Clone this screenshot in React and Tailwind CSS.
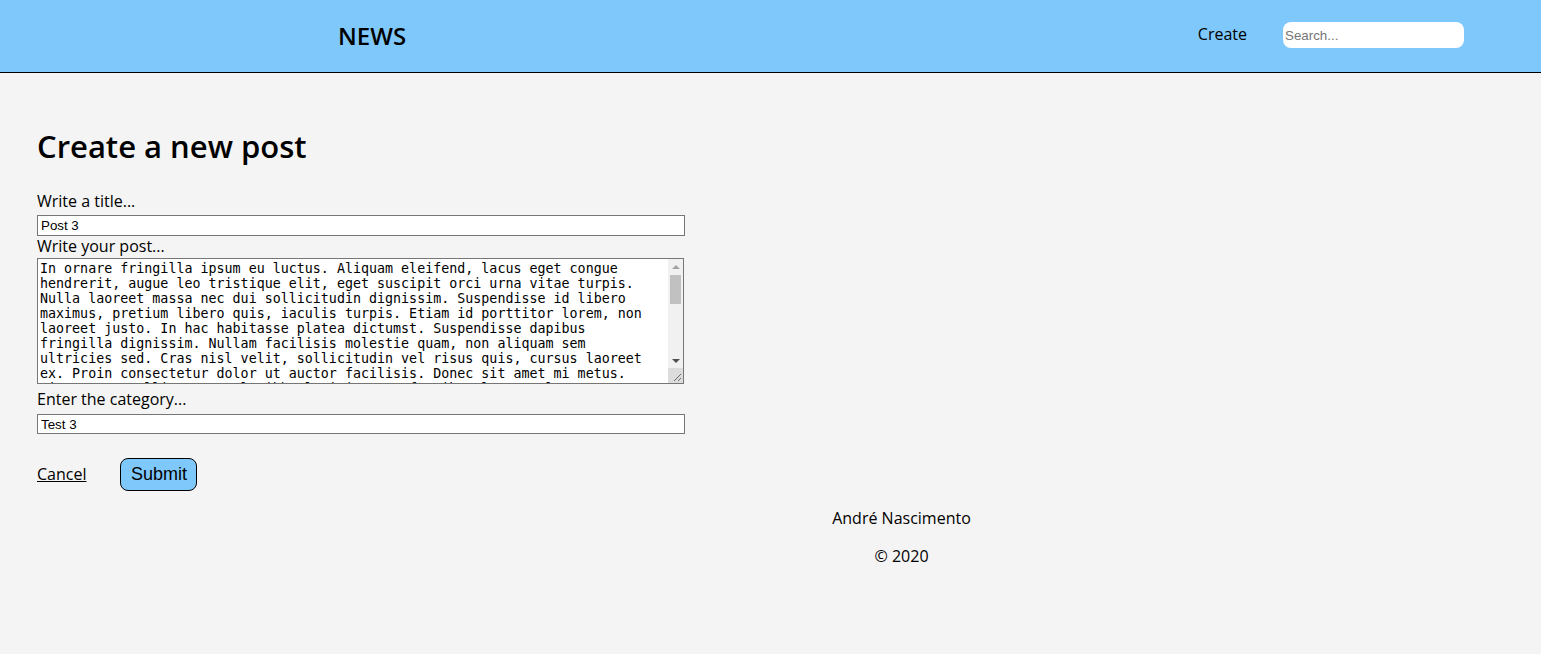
import React from "react";

const POST =
  "In ornare fringilla ipsum eu luctus. Aliquam eleifend, lacus eget congue hendrerit, augue leo tristique elit, eget suscipit orci urna vitae turpis. Nulla laoreet massa nec dui sollicitudin dignissim. Suspendisse id libero maximus, pretium libero quis, iaculis turpis. Etiam id porttitor lorem, non laoreet justo. In hac habitasse platea dictumst. Suspendisse dapibus fringilla dignissim. Nullam facilisis molestie quam, non aliquam sem ultricies sed. Cras nisl velit, sollicitudin vel risus quis, cursus laoreet ex. Proin consectetur dolor ut auctor facilisis. Donec sit amet mi metus. Vivamus convallis ante vel nibh ultricies, at faucibus lorem vulputate. Integer sed tortor nec justo tempus gravida. Praesent vitae augue a est feugiat consequat. Curabitur in risus nec velit pharetra condimentum. Morbi a turpis vitae elit tincidunt luctus. Sed nec nunc vitae magna ultricies posuere. Aenean lacinia, odio at sollicitudin aliquet, nisl lorem tincidunt erat, nec hendrerit ipsum magna sit amet nibh. Fusce vel lectus quis orci ullamcorper tempor.";

export default function App() {
  const sans = { fontFamily: '"Open Sans", sans-serif' };
  const arial = { fontFamily: '"Liberation Sans", Arial, sans-serif' };
  return (
    <div className="min-h-[654px] bg-[#f4f4f4] text-black" style={sans}>
      <header className="h-[73px] bg-[#7fc8fb] border-b border-black flex items-center">
        <div className="pl-[338px] text-[24px] font-semibold leading-none">NEWS</div>
        <div className="ml-auto self-start mt-[22px] h-[26px] flex items-center">
          <span className="text-[16px] -mt-[2px]">Create</span>
          <input
            type="text"
            placeholder="Search..."
            spellCheck={false}
            className="ml-[36px] w-[181px] h-[26px] rounded-[8px] bg-white px-[2px] text-[13.333px] outline-none placeholder:text-[#757575]"
            style={arial}
          />
        </div>
        <div className="w-[77px]" />
      </header>

      <main className="px-[37px]">
        <h1 className="mt-[51px] text-[31px] font-semibold leading-[44px]">Create a new post</h1>
        <form className="flex flex-col items-start mt-[22px]">
          <label className="h-[22px] leading-[22px] text-[16px]">Write a title...</label>
          <input
            type="text"
            defaultValue="Post 3"
            spellCheck={false}
            className="mt-[3px] w-[648px] h-[21px] border border-[#767676] bg-white px-[3px] text-[13.333px] outline-none"
            style={arial}
          />
          <label className="-mt-px h-[22px] leading-[22px] text-[16px]">Write your post...</label>
          <div className="relative mt-px w-[647px] h-[126px]">
            <textarea
              defaultValue={POST}
              spellCheck={false}
              className="block w-full h-full border border-[#767676] bg-white pl-[2px] pr-[20px] py-[2px] text-[13.333px] leading-[15px] outline-none resize-none overflow-hidden"
              style={{ fontFamily: '"DejaVu Sans Mono", monospace' }}
            />
            <div className="absolute right-px top-px bottom-px w-[15px] bg-[#f1f1f1] flex flex-col items-center">
              <div className="h-[15px] flex items-center justify-center">
                <div className="w-0 h-0 border-l-[4px] border-r-[4px] border-b-[4px] border-l-transparent border-r-transparent border-b-[#a3a3a3]" />
              </div>
              <div className="mt-[1px] w-[11px] h-[29px] bg-[#c1c1c1]" />
              <div className="flex-1" />
              <div className="h-[15px] flex items-center justify-center">
                <div className="w-0 h-0 border-l-[4px] border-r-[4px] border-t-[4px] border-l-transparent border-r-transparent border-t-[#505050]" />
              </div>
              <div className="w-[15px] h-[15px] bg-[#dcdcdc] relative overflow-hidden">
                <svg width="15" height="15" viewBox="0 0 15 15" className="absolute inset-0">
                  <line x1="13" y1="6" x2="6" y2="13" stroke="#6b6b6b" strokeWidth="1" />
                  <line x1="13" y1="10" x2="10" y2="13" stroke="#6b6b6b" strokeWidth="1" />
                </svg>
              </div>
            </div>
          </div>
          <label className="mt-[4px] h-[22px] leading-[22px] text-[16px]">Enter the category...</label>
          <input
            type="text"
            defaultValue="Test 3"
            spellCheck={false}
            className="mt-[4px] w-[648px] h-[20px] border border-[#767676] bg-white px-[3px] text-[13.333px] outline-none"
            style={arial}
          />
          <div className="mt-[24px] flex items-center">
            <a href="#" className="underline text-[16px] leading-[22px] -mt-px">Cancel</a>
            <button
              type="button"
              className="ml-[34px] w-[77px] h-[33px] rounded-[8px] border border-black bg-[#7fc8fb] text-[18px]"
              style={arial}
            >
              Submit
            </button>
          </div>
        </form>
      </main>

      <footer className="pl-[262px] text-center text-[16px] leading-[22px] mt-[16px]">
        <p>André Nascimento</p>
        <p className="mt-[16px]">© 2020</p>
      </footer>
    </div>
  );
}
